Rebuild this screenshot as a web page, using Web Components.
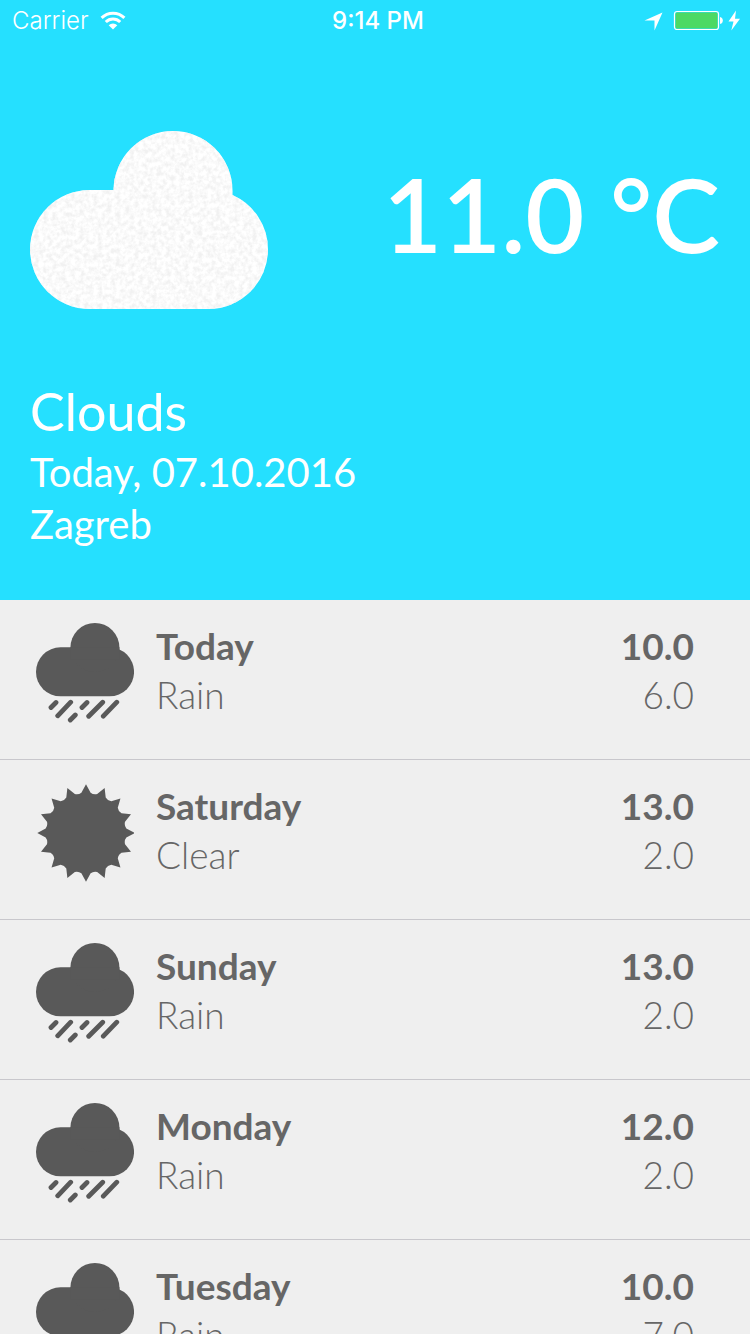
<!DOCTYPE html>
<html lang="en">
<head>
<meta charset="utf-8">
<meta name="viewport" content="width=device-width, initial-scale=1">
<title>Weather</title>
<style>
  html, body { margin: 0; height: 100%; }
  body { background: #efefef; font-family: Lato, "Open Sans", sans-serif; }
</style>
</head>
<body>
<weather-app></weather-app>
<script>
const CLOUD = `
  <rect x="0" y="59" width="238" height="119" rx="59.5"/>
  <circle cx="143" cy="59.5" r="59.5"/>
  <rect x="83.5" y="59" width="119" height="30"/>`;

/* Sixteen-pointed sun with curved valleys between the rays. */
function sunPath() {
  const at = (r, a) => (49 + r * Math.sin(a)).toFixed(2) + ' ' + (49 - r * Math.cos(a)).toFixed(2);
  const step = Math.PI / 8;
  let d = 'M' + at(48.7, 0);
  for (let i = 0; i < 16; i++) {
    d += 'L' + at(40.6, (i + 0.29) * step) + 'Q' + at(38.8, (i + 0.5) * step) + ' ' +
      at(40.6, (i + 0.71) * step) + 'L' + at(48.7, (i + 1) * step);
  }
  return d + 'Z';
}

const ICONS = {
  Rain: `<svg viewBox="0 0 98 100" aria-hidden="true">
    <g fill="currentColor" transform="scale(.412)">${CLOUD}</g>
    <path fill="none" stroke="currentColor" stroke-width="4.8" stroke-linecap="round"
      d="M15 84.5l5-5M21.7 92.8l13-13.6M34.3 97l5-5M46 84.5l5-5M52.7 93.2l14-14M67.3 93.2l13.5-14"/>
  </svg>`,
  Clear: `<svg viewBox="0 0 98 100" aria-hidden="true">
    <path fill="currentColor" transform="translate(1 1)" d="${sunPath()}"/>
  </svg>`
};

customElements.define('status-bar', class extends HTMLElement {
  connectedCallback() {
    this.attachShadow({ mode: 'open' }).innerHTML = `
      <style>
        :host { display: grid; grid-template-columns: 1fr auto 1fr; align-items: center;
          height: 42px; padding: 0 10px 0 12px; font: 300 24px/42px Inter, sans-serif; color: #fff; }
        .left, .right { display: flex; align-items: center; }
        .left { gap: 11px; }
        .right { justify-content: flex-end; gap: 10px; }
        time { font-weight: 500; padding-left: 4px; }
        svg { display: block; }
      </style>
      <div class="left"><span>Carrier</span>
        <svg width="26" height="20" viewBox="0 0 26 20" aria-hidden="true">
          <path d="M1.6 6.9a16 16 0 0 1 22.8 0M5.8 11a10.2 10.2 0 0 1 14.4 0" fill="none" stroke="#fff" stroke-width="3"/>
          <path d="M13 18.6L8.7 14.2a6.1 6.1 0 0 1 8.6 0z" fill="#fff"/>
        </svg>
      </div>
      <time>9:14 PM</time>
      <div class="right">
        <svg width="19" height="19" viewBox="0 0 19 19" aria-hidden="true"><path d="M18.5 .5L10.5 18.5V8.5H.5z" fill="#fff"/></svg>
        <svg width="67" height="22" viewBox="0 0 67 22" aria-hidden="true">
          <rect x="1.5" y="1.5" width="44" height="18" rx="2.5" fill="none" stroke="#fff" stroke-width="1.2"/>
          <rect x="2.5" y="2.5" width="42" height="16" rx="1.5" fill="#4cd964"/>
          <path d="M47 7q2.8 .5 2.8 3.5T47 14z" fill="#fff"/>
          <path d="M63 .5L55.5 11.5h5L58.3 20.5 67 8.7h-5z" fill="#fff"/>
        </svg>
      </div>`;
  }
});

customElements.define('current-weather', class extends HTMLElement {
  connectedCallback() {
    this.attachShadow({ mode: 'open' }).innerHTML = `
      <style>
        :host { display: block; padding: 89px 30px 50px; color: #fff; }
        .now { display: flex; justify-content: space-between; align-items: center; }
        svg { display: block; width: 238px; height: 178px; }
        ::slotted([slot=temperature]) { margin-bottom: 12px; font-size: 102px; line-height: 120px; font-weight: 600; }
        .place { margin-top: 71px; font-size: 40px; line-height: 52px; }
        ::slotted([slot=condition]) { display: block; margin: 0 0 4px; font-size: 52px; line-height: 62px; font-weight: 400; }
        ::slotted(p) { margin: 0; }
      </style>
      <div class="now">
        <svg viewBox="0 0 238 178" role="img" aria-label="Cloudy">
          <defs>
            <clipPath id="shape">${CLOUD}</clipPath>
            <filter id="grain" x="0" y="0" width="100%" height="100%" color-interpolation-filters="sRGB">
              <feTurbulence type="fractalNoise" baseFrequency=".22" numOctaves="3" seed="4"/>
              <feColorMatrix values="0 0 0 0 .945  0 0 0 0 .945  0 0 0 0 .945  2.5 0 0 0 -.9"/>
            </filter>
          </defs>
          <g clip-path="url(#shape)">
            <rect width="238" height="178" fill="#fff"/>
            <rect width="238" height="178" filter="url(#grain)"/>
          </g>
        </svg>
        <slot name="temperature"></slot>
      </div>
      <div class="place"><slot name="condition"></slot><slot></slot></div>`;
  }
});

customElements.define('forecast-row', class extends HTMLElement {
  connectedCallback() {
    this.attachShadow({ mode: 'open' }).innerHTML = `
      <style>
        :host { display: flex; gap: 22px; box-sizing: border-box; height: 160px; padding: 21px 56px 0 36px;
          border-bottom: 1px solid #c8c7cc; font-size: 37px; line-height: 49px; color: #666; }
        .icon { width: 98px; padding-top: 2px; color: #595959; }
        svg { display: block; width: 98px; height: 100px; }
        .label { flex: 1; }
        .range { text-align: right; }
        .strong { font-weight: 700; }
        .soft { font-weight: 300; }
      </style>
      <div class="icon">${ICONS[this.getAttribute('condition')]}</div>
      <div class="label">
        <div class="strong"><slot></slot></div>
        <div class="soft">${this.getAttribute('condition')}</div>
      </div>
      <div class="range">
        <div class="strong">${this.getAttribute('high')}</div>
        <div class="soft">${this.getAttribute('low')}</div>
      </div>`;
  }
});

customElements.define('weather-app', class extends HTMLElement {
  connectedCallback() {
    this.attachShadow({ mode: 'open' }).innerHTML = `
      <style>
        :host { display: flex; flex-direction: column; height: 100vh; }
        header { background: #25e0ff; flex: none; }
        main { flex: 1; min-height: 0; overflow-y: auto; scrollbar-width: none; background: #efefef; }
      </style>
      <header>
        <status-bar></status-bar>
        <current-weather>
          <span slot="temperature">11.0 °C</span>
          <h1 slot="condition">Clouds</h1>
          <p>Today, 07.10.2016</p>
          <p>Zagreb</p>
        </current-weather>
      </header>
      <main>
        <forecast-row condition="Rain" high="10.0" low="6.0">Today</forecast-row>
        <forecast-row condition="Clear" high="13.0" low="2.0">Saturday</forecast-row>
        <forecast-row condition="Rain" high="13.0" low="2.0">Sunday</forecast-row>
        <forecast-row condition="Rain" high="12.0" low="2.0">Monday</forecast-row>
        <forecast-row condition="Rain" high="10.0" low="7.0">Tuesday</forecast-row>
      </main>`;
  }
});
</script>
</body>
</html>
